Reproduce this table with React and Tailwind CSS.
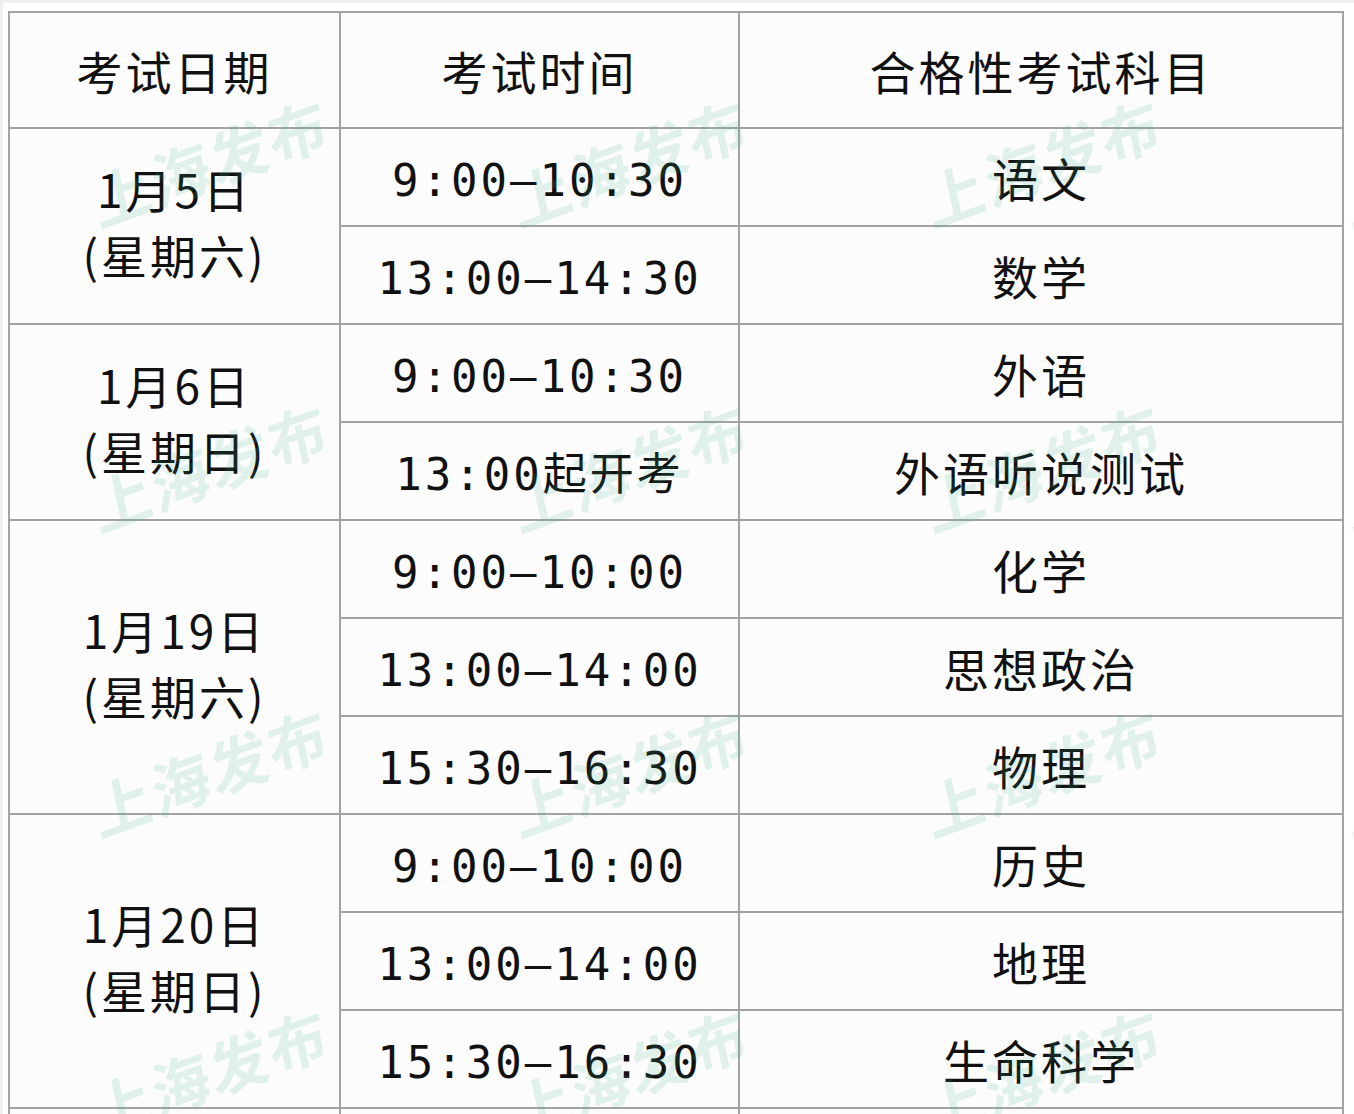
import React from "react";

const rows = [
  { date: "1月5日", week: "(星期六)", items: [["9:00—10:30", "语文"], ["13:00–14:30", "数学"]] },
  { date: "1月6日", week: "(星期日)", items: [["9:00—10:30", "外语"], ["13:00起开考", "外语听说测试"]] },
  {
    date: "1月19日",
    week: "(星期六)",
    items: [["9:00—10:00", "化学"], ["13:00—14:00", "思想政治"], ["15:30—16:30", "物理"]],
  },
  {
    date: "1月20日",
    week: "(星期日)",
    items: [["9:00—10:00", "历史"], ["13:00—14:00", "地理"], ["15:30—16:30", "生命科学"]],
  },
];

const cjk = { fontFamily: '"Noto Sans CJK SC", "Noto Sans", sans-serif' };
const mono = { fontFamily: '"DejaVu Sans Mono", "Noto Sans CJK SC", monospace' };

const spanClass = { 2: "row-span-2", 3: "row-span-3" };

// watermark centres
const marks = [];
[160, 465, 770, 1070].forEach((y) => {
  [210, 630, 1043, 1462].forEach((x) => marks.push({ x, y }));
});

export default function App() {
  return (
    <div className="relative min-h-screen bg-white overflow-hidden">
      <div className="bg-[#efefef] pt-[3px] pl-[3px]">
        <div className="bg-white pt-[8px] pl-[5px]">
          {/* Table */}
          <div
            className="grid grid-cols-[329px_397px_602px] grid-rows-[114px_repeat(11,96px)] gap-[2px] w-[1336px] bg-[#a3a3a3] border-2 border-[#a3a3a3] text-[#111]"
            style={cjk}
          >
            {/* Header */}
            <div className="bg-[#fcfcfc] flex items-center justify-center text-[46px] tracking-[3px]">
              考试日期
            </div>
            <div className="bg-[#fcfcfc] flex items-center justify-center text-[46px] tracking-[3px]">
              考试时间
            </div>
            <div className="bg-[#fcfcfc] flex items-center justify-center text-[46px] tracking-[3px]">
              合格性考试科目
            </div>

            {rows.map((r) => (
              <React.Fragment key={r.date}>
                <div
                  className={`${spanClass[r.items.length]} col-start-1 bg-[#fcfcfc] flex flex-col items-center justify-center pb-[10px] text-[46px] leading-[66px] tracking-[3px]`}
                >
                  <span>{r.date}</span>
                  <span>{r.week}</span>
                </div>
                {r.items.map(([time, subject]) => (
                  <React.Fragment key={time + subject}>
                    <div
                      className="col-start-2 bg-[#fcfcfc] flex items-center justify-center text-[44px] tracking-[3px] pt-[8px]"
                      style={mono}
                    >
                      {time}
                    </div>
                    <div className="col-start-3 bg-[#fcfcfc] flex items-center justify-center text-[46px] tracking-[3px]">
                      {subject}
                    </div>
                  </React.Fragment>
                ))}
              </React.Fragment>
            ))}

            {/* next row continues below the fold */}
            <div className="bg-[#fcfcfc]" />
            <div className="bg-[#fcfcfc]" />
            <div className="bg-[#fcfcfc]" />
          </div>
        </div>
      </div>

      {/* Watermarks */}
      <div className="pointer-events-none absolute inset-0">
        {marks.map((m) => (
          <div
            key={`${m.x}-${m.y}`}
            className="absolute -translate-x-1/2 -translate-y-1/2 -rotate-[20deg] skew-x-[-8deg] whitespace-nowrap text-[60px] font-bold tracking-[2px] text-[rgba(60,175,145,0.14)]"
            style={{ left: m.x, top: m.y, ...cjk }}
          >
            上海发布
          </div>
        ))}
      </div>
    </div>
  );
}
